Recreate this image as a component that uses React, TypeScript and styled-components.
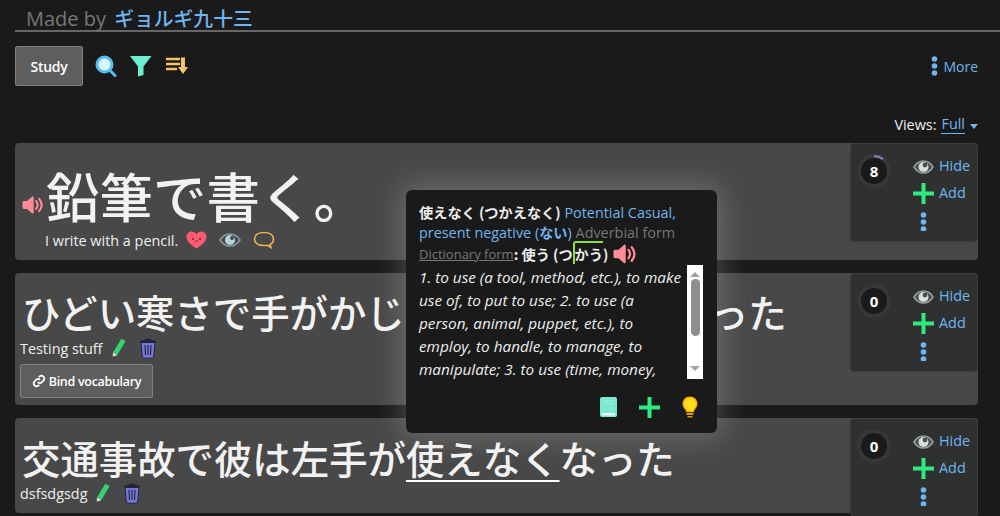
import React from 'react'
import styled, { createGlobalStyle } from 'styled-components'

const GlobalStyle = createGlobalStyle`
  html, body {
    margin: 0;
    padding: 0;
    height: 516px;
    overflow: hidden;
    background: #1a1a1a;
    font-family: "Open Sans", "Noto Sans CJK JP", sans-serif;
    font-size: 14.4px;
    color: #eee;
  }
`

const JP = '"Noto Sans CJK JP", "Open Sans", sans-serif'

const Page = styled.div`
  position: relative;
  width: 1000px;
  height: 516px;
  overflow: hidden;
  padding: 0 22px 0 15px;
  box-sizing: border-box;
`

const Header = styled.div`
  height: 30px;
  margin-right: -22px;
  padding-left: 11px;
  border-bottom: 2px solid #666;
  font-size: 20px;
  line-height: 36px;
  color: #777;
  white-space: nowrap;
`

const Author = styled.span`
  color: #6fb6ee;
  font-family: ${JP};
  font-size: 19.8px;
  font-weight: 500;
  margin-left: 3px;
`

const Toolbar = styled.div`
  display: flex;
  align-items: center;
  height: 40px;
  margin-top: 14px;
`

const Button = styled.div`
  display: inline-flex;
  align-items: center;
  justify-content: center;
  box-sizing: border-box;
  background: #5e5e5e;
  border: 1px solid #808080;
  border-radius: 2px;
  color: #fff;
  font-size: 14px;
  font-weight: 600;
  letter-spacing: -0.3px;
`

const StudyButton = styled(Button)`
  width: 68px;
  height: 40px;
  margin-right: 12px;
`

const BindButton = styled(Button)`
  width: 133px;
  height: 34px;
  margin-top: 4px;
  font-size: 12.5px;
  gap: 3px;
`

const ToolIcon = styled.svg<{ $gap?: number; $left?: number }>`
  display: block;
  flex: none;
  margin-left: ${(p) => p.$left ?? 0}px;
  margin-right: ${(p) => p.$gap ?? 0}px;
`

const More = styled.div`
  margin-left: auto;
  display: flex;
  align-items: center;
  gap: 5px;
  color: #6fb6ee;
  font-size: 14px;
`

const ViewsRow = styled.div`
  display: flex;
  justify-content: flex-end;
  align-items: center;
  height: 20px;
  margin-top: 28px;
  color: #eee;
`

const ViewsLink = styled.span`
  color: #6fb6ee;
  margin-left: 5px;
  border-bottom: 1px solid #6fb6ee;
  line-height: 18px;
`

const Caret = styled.span`
  width: 0;
  height: 0;
  margin: 5px 0 0 5px;
  border-left: 4px solid transparent;
  border-right: 4px solid transparent;
  border-top: 5px solid #6fb6ee;
`

const Cards = styled.div`
  display: flex;
  flex-direction: column;
  gap: 13px;
  margin-top: 9px;
`

const Card = styled.div<{ $height: number }>`
  display: flex;
  justify-content: space-between;
  align-items: flex-start;
  height: ${(p) => p.$height}px;
  flex: none;
  background: #484848;
  border-radius: 4px;
`

const CardMain = styled.div<{ $top: number }>`
  flex: 1;
  min-width: 0;
  padding: ${(p) => p.$top}px 0 0 5px;
`

const HeroRow = styled.div`
  display: flex;
  align-items: flex-start;
  margin-left: 2px;
`

const HeroSound = styled.div`
  margin-top: 31px;
`

const Sentence = styled.div<{ $size: number }>`
  font-family: ${JP};
  font-size: ${(p) => p.$size}px;
  font-weight: 500;
  line-height: 1.2;
  color: #f2f2f2;
  white-space: nowrap;
  margin-left: 2px;
`

const Target = styled.span`
  text-decoration: underline;
  text-decoration-thickness: 2px;
  text-underline-offset: 6px;
  text-decoration-skip-ink: none;
  text-decoration-color: #fff;
`

const Meaning = styled.div`
  display: flex;
  align-items: center;
  color: #eee;
  height: 22px;
  margin: 2px 0 0 25px;
`

const Side = styled.div`
  flex: none;
  width: 128px;
  height: 99px;
  box-sizing: border-box;
  background: #2f3131;
  border: 1px solid #3a3c3c;
  border-radius: 4px;
  display: flex;
  padding: 9px 0 0 8px;
`

const Ring = styled.div`
  flex: none;
  width: 26px;
  height: 26px;
  margin: 5px 0 0 2px;
  border-radius: 50%;
  background: #1a1a1a;
  box-shadow: 0 0 0 4px #363838;
  color: #fff;
  font-size: 15px;
  font-weight: 700;
  display: flex;
  align-items: center;
  justify-content: center;
  position: relative;
`

const RingArc = styled.svg`
  position: absolute;
  left: -4px;
  top: -4px;
`

const Actions = styled.div`
  margin-left: 26px;
  display: flex;
  flex-direction: column;
  color: #6fb6ee;
`

const Action = styled.div`
  display: flex;
  align-items: center;
  gap: 5px;
  height: 27px;
`

const ActionLabel = styled.span`
  padding-bottom: 2px;
`

const Popup = styled.div`
  position: absolute;
  left: 406px;
  top: 190px;
  width: 311px;
  height: 243px;
  box-sizing: border-box;
  background: #1a1a1a;
  border-radius: 6px;
  padding: 12px 13px 0;
  box-shadow: 0 0 30px 4px rgba(255, 255, 255, 0.22);
`

const PopLine = styled.div`
  line-height: 20px;
  height: 20px;
  white-space: nowrap;
  color: #eee;
`

const SoundLine = styled(PopLine)`
  display: flex;
  align-items: center;
  margin-top: 2px;
`

const PopWord = styled.span<{ $blue?: boolean }>`
  font-family: ${JP};
  font-weight: 700;
  font-size: 14.2px;
  color: ${(p) => (p.$blue ? '#6fb6ee' : '#eee')};
`

const Blue = styled.span`
  color: #6fb6ee;
`

const Grey = styled.span`
  color: #777;
`

const DictLink = styled.span`
  color: #777;
  font-size: 13px;
  text-decoration: underline;
`

const Pitch = styled.span`
  border-left: 2px solid #8fe03a;
  border-top: 2px solid #8fe03a;
  border-radius: 3px 0 0 0;
  padding-top: 1px;
`

const SoundGap = styled.span`
  width: 5px;
`

const DefArea = styled.div`
  display: flex;
  justify-content: space-between;
  height: 114px;
  margin-top: 1px;
  margin-right: 1px;
`

const DefText = styled.div`
  font-style: italic;
  font-size: 15.3px;
  line-height: 23.1px;
  color: #eee;
  width: 266px;
  margin-top: 1px;
  white-space: nowrap;
`

const Scrollbar = styled.div`
  width: 16px;
  height: 114px;
  background: #fff;
  display: flex;
  flex-direction: column;
  align-items: center;
  justify-content: space-between;
  padding: 7px 0 8px;
  box-sizing: border-box;
`

const ScrollThumb = styled.div`
  width: 9px;
  height: 57px;
  background: #8e8e8e;
  border-radius: 5px;
  margin: 2px 0 auto;
`

const ScrollUp = styled.div`
  width: 0;
  height: 0;
  border-left: 5px solid transparent;
  border-right: 5px solid transparent;
  border-bottom: 5px solid #a3a3a3;
`

const ScrollDown = styled.div`
  width: 0;
  height: 0;
  border-left: 5px solid transparent;
  border-right: 5px solid transparent;
  border-top: 5px solid #a3a3a3;
`

const PopFooter = styled.div`
  display: flex;
  justify-content: flex-end;
  align-items: center;
  gap: 22px;
  margin-top: 17px;
  padding-right: 6px;
`

const NoteRow = styled.div<{ $top: number }>`
  display: flex;
  align-items: center;
  color: #eee;
  height: 24px;
  margin-top: ${(p) => p.$top}px;
`

const Speaker = ({ size = 22 }: { size?: number }) => (
  <ToolIcon width={size} height={size} viewBox="0 0 22 22">
    <path d="M.5 8.500c0-.8.6-1.400 1.400-1.400H5L10 2.800c.7-.6 1.700-.1 1.700.8v14.800c0 .9-1 1.400-1.700.8L5 14.900H1.900c-.8 0-1.400-.6-1.400-1.400z" fill="#ff8b94" />
    <path d="M14.200 7.200c1.700 2.300 1.700 5.300 0 7.600M17.200 4.800c3 3.800 3 8.600 0 12.400" fill="none" stroke="#ff8b94" strokeWidth="2.100" strokeLinecap="round" />
  </ToolIcon>
)

const Eye = () => (
  <ToolIcon width={21} height={16} viewBox="0 0 21 16">
    <path d="M1 8c2.400-4 5.800-6 9.500-6s7.100 2 9.500 6c-2.400 4-5.800 6-9.500 6S3.400 12 1 8z" fill="#4c4f4f" stroke="#9a9d9d" strokeWidth="1.600" />
    <circle cx="10.500" cy="8" r="5" fill="#d9dede" />
    <circle cx="12" cy="6" r="2.400" fill="#4c4f4f" />
  </ToolIcon>
)

const Plus = () => (
  <ToolIcon width={21} height={21} viewBox="0 0 21 21">
    <path d="M8.500 0h4v8.500H21v4h-8.500V21h-4v-8.500H0v-4h8.500z" fill="#2eea7f" />
  </ToolIcon>
)

const Dots = () => (
  <ToolIcon width={7} height={20} viewBox="0 0 7 20">
    <circle cx="3.500" cy="3" r="2.800" fill="#6fb6ee" />
    <circle cx="3.500" cy="10" r="2.800" fill="#6fb6ee" />
    <circle cx="3.500" cy="17" r="2.800" fill="#6fb6ee" />
  </ToolIcon>
)

const Pencil = () => (
  <ToolIcon width={14} height={20} viewBox="0 0 14 20" $left={9}>
    <path d="M9.300.7 13.700 3 5.300 17 1 14.500z" fill="#35d46f" />
    <path d="M1 14.500 5.300 17 .5 19.500z" fill="#e8d9c8" />
    <path d="M.8 17.800l1.700 1-2 .8z" fill="#3a1f1f" />
  </ToolIcon>
)

const Trash = () => (
  <ToolIcon width={18} height={22} viewBox="0 0 18 22" $left={13}>
    <path d="M6 2.500C6 1 12 1 12 2.500l5 1.500v1.500H1V4z" fill="#23233a" />
    <path d="M2 5.500h14L14.800 19c-.1 1.500-1 2.200-2.200 2.200H5.400c-1.200 0-2.100-.7-2.200-2.200z" fill="#7378d8" stroke="#23233a" strokeWidth="1" />
    <path d="M6 8l.5 10M9 8v10M12 8l-.5 10" stroke="#23233a" strokeWidth="1.100" />
  </ToolIcon>
)

const SidePanel = ({ count, arc }: { count: number; arc?: boolean }) => (
  <Side>
    <Ring>
      {count}
      {arc && (
        <RingArc width={34} height={34} viewBox="0 0 34 34">
          <path d="M17 2a15 15 0 0 1 9 3" fill="none" stroke="#8d7fc9" strokeWidth="2" />
        </RingArc>
      )}
    </Ring>
    <Actions>
      <Action>
        <Eye />
        <ActionLabel>Hide</ActionLabel>
      </Action>
      <Action>
        <Plus />
        <ActionLabel>Add</ActionLabel>
      </Action>
      <Action>
        <ToolIcon width={21} height={20} viewBox="0 0 21 20">
          <circle cx="10.500" cy="4" r="2.800" fill="#6fb6ee" />
          <circle cx="10.500" cy="11" r="2.800" fill="#6fb6ee" />
          <circle cx="10.500" cy="18" r="2.800" fill="#6fb6ee" />
        </ToolIcon>
      </Action>
    </Actions>
  </Side>
)

const App = () => (
  <Page>
    <GlobalStyle />
    <Header>
      Made by <Author>ギョルギ九十三</Author>
    </Header>

    <Toolbar>
      <StudyButton>Study</StudyButton>
      <ToolIcon width={22} height={22} viewBox="0 0 22 22" $gap={13}>
        <path d="M14.500 15l5.500 5.500" stroke="#55bdf0" strokeWidth="3" strokeLinecap="round" />
        <circle cx="9.500" cy="9.500" r="7.500" fill="#d8f6ff" stroke="#55bdf0" strokeWidth="3" />
      </ToolIcon>
      <ToolIcon width={22} height={22} viewBox="0 0 22 22" $gap={14}>
        <path d="M0 1h21.500l-8 10.500V20l-5.500 1.500V11.500z" fill="#6cefcf" />
      </ToolIcon>
      <ToolIcon width={22} height={20} viewBox="0 0 22 20">
        <path d="M1 3h12M1 8h12M1 13h9" stroke="#f7c468" strokeWidth="2.600" strokeLinecap="round" />
        <path d="M15 1.500h4V11h3l-5 7-5-7h3z" fill="#f7c468" />
      </ToolIcon>
      <More>
        <Dots />
        <span>More</span>
      </More>
    </Toolbar>

    <ViewsRow>
      Views: <ViewsLink>Full</ViewsLink>
      <Caret />
    </ViewsRow>

    <Cards>
      <Card $height={117}>
        <CardMain $top={20}>
          <HeroRow>
            <HeroSound>
              <Speaker />
            </HeroSound>
            <Sentence $size={53.5}>鉛筆で書く。</Sentence>
          </HeroRow>
          <Meaning>
            I write with a pencil.
            <ToolIcon width={21} height={18} viewBox="0 0 21 18" $left={8}>
              <path d="M10.500 17.500C4 13.500.5 10 .5 5.800.5 2.700 3 .5 5.700.5c2 0 3.700 1 4.800 2.800C11.600 1.500 13.300.5 15.300.5 18 .5 20.500 2.700 20.500 5.800c0 4.200-3.500 7.700-10 11.700z" fill="#fb5c73" />
              <circle cx="7" cy="8" r="1" fill="#7a2333" />
              <circle cx="14" cy="8" r="1" fill="#7a2333" />
              <path d="M9 9.500c.8 1 2.200 1 3 0" fill="none" stroke="#7a2333" strokeWidth="1" />
            </ToolIcon>
            <ToolIcon width={22} height={16} viewBox="0 0 22 16" $left={12}>
              <path d="M1 8c2.500-4 6-6 10-6s7.500 2 10 6c-2.500 4-6 6-10 6S3.500 12 1 8z" fill="#3d4a50" stroke="#8a9aa0" strokeWidth="1.500" />
              <circle cx="11" cy="8" r="5" fill="#b8d4df" />
              <circle cx="13" cy="6" r="2" fill="#3d4a50" />
            </ToolIcon>
            <ToolIcon width={22} height={18} viewBox="0 0 22 18" $left={12}>
              <path d="M11 1.500c5.500 0 9.500 2.500 9.500 6.500 0 3-2 4.800-3.500 5.500l1 3-3.500-2.200c-1.200.2-2.400.2-3.500.2C5.500 14.500 1.500 12 1.500 8S5.500 1.500 11 1.500z" fill="none" stroke="#e9b44c" strokeWidth="1.600" />
            </ToolIcon>
          </Meaning>
        </CardMain>
        <SidePanel count={8} arc />
      </Card>

      <Card $height={132}>
        <CardMain $top={15}>
          <Sentence $size={38.4}>ひどい寒さで手がかじかんで使えなくなった</Sentence>
          <NoteRow $top={2}>
            Testing stuff
            <Pencil />
            <Trash />
          </NoteRow>
          <BindButton>
            <ToolIcon width={14} height={14} viewBox="0 0 24 24">
              <path d="M10 14a5 5 0 0 0 7 0l3-3a5 5 0 0 0-7-7l-1.500 1.500M14 10a5 5 0 0 0-7 0l-3 3a5 5 0 0 0 7 7l1.500-1.500" fill="none" stroke="#fff" strokeWidth="3" />
            </ToolIcon>
            Bind vocabulary
          </BindButton>
        </CardMain>
        <SidePanel count={0} />
      </Card>

      <Card $height={95}>
        <CardMain $top={16}>
          <Sentence $size={38.4}>
            交通事故で彼は左手が<Target>使えなく</Target>なった
          </Sentence>
          <NoteRow $top={1}>
            dsfsdgsdg
            <Pencil />
            <Trash />
          </NoteRow>
        </CardMain>
        <SidePanel count={0} />
      </Card>
    </Cards>

    <Popup>
      <PopLine>
        <PopWord>使えなく (つかえなく)</PopWord> <Blue>Potential Casual,</Blue>
      </PopLine>
      <PopLine>
        <Blue>present negative (<PopWord $blue>ない</PopWord>)</Blue> <Grey>Adverbial form</Grey>
      </PopLine>
      <SoundLine>
        <DictLink>Dictionary form</DictLink>
        <PopWord>: 使う (つ<Pitch>かう</Pitch>)</PopWord>
        <SoundGap />
        <Speaker size={24} />
      </SoundLine>
      <DefArea>
        <DefText>
          1. to use (a tool, method, etc.), to make
          <br />
          use of, to put to use; 2. to use (a
          <br />
          person, animal, puppet, etc.), to
          <br />
          employ, to handle, to manage, to
          <br />
          manipulate; 3. to use (time, money,
        </DefText>
        <Scrollbar>
          <ScrollUp />
          <ScrollThumb />
          <ScrollDown />
        </Scrollbar>
      </DefArea>
      <PopFooter>
        <ToolIcon width={17} height={20} viewBox="0 0 17 20">
          <rect x="0" y="0" width="17" height="20" rx="2" fill="#7be8d2" />
          <rect x="2" y="16" width="13" height="2.500" fill="#e8fbf6" />
          <path d="M3 4h11M3 7h11" stroke="#9ff0de" strokeWidth="1" />
        </ToolIcon>
        <Plus />
        <ToolIcon width={16} height={22} viewBox="0 0 16 22">
          <path d="M8 .5C3.800.5.5 3.700.5 7.700c0 2.400 1.200 4 2.400 5.500.8 1 1.300 2 1.300 3h7.600c0-1 .5-2 1.300-3 1.200-1.500 2.400-3.100 2.400-5.500C15.500 3.700 12.200.5 8 .5z" fill="#ffb300" />
          <path d="M8 2.200C4.700 2.200 2.200 4.700 2.200 7.800c0 2 1 3.300 2 4.500.7.900 1.200 1.700 1.400 2.400h4.800c.2-.7.700-1.500 1.400-2.400 1-1.200 2-2.500 2-4.500 0-3.100-2.500-5.600-5.800-5.600z" fill="#ffe01f" />
          <rect x="4.500" y="17" width="7" height="2" fill="#d69a00" />
          <rect x="5.500" y="20" width="5" height="1.500" fill="#d69a00" />
        </ToolIcon>
      </PopFooter>
    </Popup>
  </Page>
)

export default App
